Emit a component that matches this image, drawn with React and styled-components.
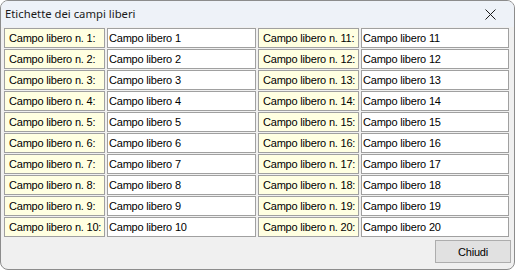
import React from "react";
import styled, { createGlobalStyle } from "styled-components";

const Global = createGlobalStyle`
  html, body { margin: 0; padding: 0; background: #ffffff; }
  body { font-family: "Liberation Sans", Arial, sans-serif; }
`;

const Window = styled.div`
  box-sizing: border-box;
  width: 515px;
  height: 270px;
  border: 1px solid #8c8c8c;
  border-radius: 8px;
  background: #f0f0f0;
  overflow: hidden;
  display: flex;
  flex-direction: column;
`;

const TitleBar = styled.div`
  height: 26px;
  flex: none;
  background: #eef2f8;
  display: flex;
  align-items: center;
  justify-content: space-between;
  padding: 0 0 0 4px;
`;

const Title = styled.span`
  font-family: "Noto Sans", "Open Sans", sans-serif;
  font-size: 11.3px;
  color: #1a1a1a;
  margin-top: -1px;
`;

const CloseBtn = styled.div`
  width: 46px;
  height: 26px;
  display: flex;
  align-items: center;
  justify-content: center;
  margin-right: 1px;
`;

const Body = styled.div`
  flex: 1;
  display: flex;
  flex-direction: column;
  padding: 1px 4px 0 3px;
`;

const Grid = styled.div`
  display: grid;
  grid-template-columns: 101px 149px 101px 148px;
  grid-auto-rows: 20px;
  column-gap: 2px;
  row-gap: 1px;
`;

const Cell = styled.div`
  box-sizing: border-box;
  border: 1px solid #a0a0a0;
  background: ${(p) => (p.$label ? "#ffffe1" : "#ffffff")};
  font-family: "Liberation Sans", Arial, sans-serif;
  font-size: 11px;
  letter-spacing: -0.2px;
  color: #000;
  display: flex;
  align-items: center;
  padding: 0 0 1px ${(p) => (p.$label ? "4px" : "1px")};
  white-space: nowrap;
  overflow: hidden;
`;

const Footer = styled.div`
  display: flex;
  justify-content: flex-end;
  margin-top: 3px;
`;

const Button = styled.button`
  box-sizing: border-box;
  width: 76px;
  height: 23px;
  background: #e1e1e1;
  border: 1px solid #adadad;
  font-family: "Liberation Sans", Arial, sans-serif;
  font-size: 11px;
  letter-spacing: -0.2px;
  color: #000;
  padding: 0;
  margin-right: -1px;
`;

const rows = Array.from({ length: 10 }, (_, i) => i + 1);

export default function App() {
  return (
    <>
      <Global />
      <Window>
        <TitleBar>
          <Title>Etichette dei campi liberi</Title>
          <CloseBtn>
            <svg width="11" height="11" viewBox="0 0 11 11">
              <path d="M0.5 0.5 L10.5 10.5 M10.5 0.5 L0.5 10.5" stroke="#1a1a1a" strokeWidth="1" fill="none" />
            </svg>
          </CloseBtn>
        </TitleBar>
        <Body>
          <Grid>
            {rows.map((n) => (
              <React.Fragment key={n}>
                <Cell $label>Campo libero n. {n}:</Cell>
                <Cell>Campo libero {n}</Cell>
                <Cell $label>Campo libero n. {n + 10}:</Cell>
                <Cell>Campo libero {n + 10}</Cell>
              </React.Fragment>
            ))}
          </Grid>
          <Footer>
            <Button>Chiudi</Button>
          </Footer>
        </Body>
      </Window>
    </>
  );
}
